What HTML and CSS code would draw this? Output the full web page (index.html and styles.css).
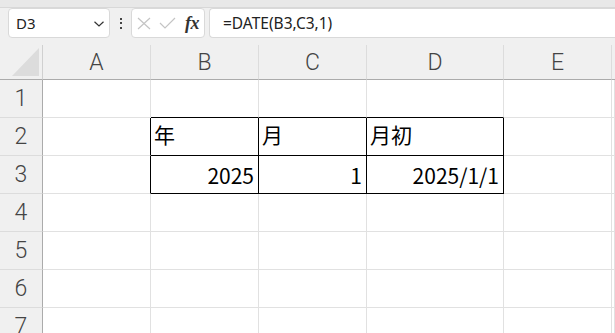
FILE: index.html
```html
<!DOCTYPE html>
<html lang="ja">
<head>
<meta charset="utf-8">
<title>Excel</title>
<link rel="stylesheet" href="styles.css">
</head>
<body>
<div class="app">
  <div class="topstrip"></div>
  <div class="fbar">
    <div class="namebox">
      <span class="nb-text">D3</span>
      <svg class="chev" width="10" height="6" viewBox="0 0 10 6"><path d="M0.5 0.8 L5 5 L9.5 0.8" fill="none" stroke="#333" stroke-width="1.2"/></svg>
    </div>
    <div class="dots"><span></span><span></span><span></span></div>
    <div class="fxbox">
      <svg class="ico" width="14" height="13" viewBox="0 0 14 13"><path d="M1 1 L13 12 M13 1 L1 12" stroke="#c4c4c4" stroke-width="1.2" fill="none"/></svg>
      <svg class="ico" width="17" height="12" viewBox="0 0 17 12"><path d="M1 6 L6 11 L16 1" stroke="#c4c4c4" stroke-width="1.2" fill="none"/></svg>
      <span class="fx">fx</span>
    </div>
    <div class="formula">=DATE(B3,C3,1)</div>
  </div>
  <div class="gap"></div>
  <div class="grid">
    <div class="corner"><div class="tri"></div></div>
    <div class="ch">A</div>
    <div class="ch">B</div>
    <div class="ch">C</div>
    <div class="ch">D</div>
    <div class="ch">E</div>
    <div class="ch last"></div>

    <div class="rh">1</div>
    <div class="c"></div>
    <div class="c bb"></div>
    <div class="c bb"></div>
    <div class="c bb"></div>
    <div class="c"></div>
    <div class="c"></div>

    <div class="rh">2</div>
    <div class="c br"></div>
    <div class="c bk txt">年</div>
    <div class="c bk txt">月</div>
    <div class="c bk txt">月初</div>
    <div class="c"></div>
    <div class="c"></div>

    <div class="rh">3</div>
    <div class="c br"></div>
    <div class="c bk num">2025</div>
    <div class="c bk num">1</div>
    <div class="c bk num">2025/1/1</div>
    <div class="c"></div>
    <div class="c"></div>

    <div class="rh">4</div>
    <div class="c"></div><div class="c"></div><div class="c"></div><div class="c"></div><div class="c"></div><div class="c"></div>
    <div class="rh">5</div>
    <div class="c"></div><div class="c"></div><div class="c"></div><div class="c"></div><div class="c"></div><div class="c"></div>
    <div class="rh">6</div>
    <div class="c"></div><div class="c"></div><div class="c"></div><div class="c"></div><div class="c"></div><div class="c"></div>
    <div class="rh">7</div>
    <div class="c"></div><div class="c"></div><div class="c"></div><div class="c"></div><div class="c"></div><div class="c"></div>
  </div>
</div>
</body>
</html>
```
FILE: styles.css
```css
* { box-sizing: border-box; }
html, body { margin: 0; padding: 0; }
body {
  width: 615px;
  height: 333px;
  overflow: hidden;
  background: #f0f0f0;
  font-family: "Noto Sans", "Noto Sans CJK JP", sans-serif;
}
.app { width: 615px; height: 333px; overflow: hidden; }
.topstrip {
  height: 8px;
  background: #e8e8e8;
  border-bottom: 1px solid #d8d8d8;
}
.fbar {
  display: flex;
  height: 30px;
  padding-left: 8px;
  background: #f0f0f0;
}
.namebox {
  width: 102px;
  background: #fff;
  border: 1px solid #d9d9d9;
  border-radius: 4px;
  display: flex;
  align-items: center;
  justify-content: space-between;
  padding: 0 5px 0 7px;
}
.nb-text { font-size: 15px; color: #222; }
.chev { margin-top: 1px; }
.dots {
  width: 21px;
  display: flex;
  flex-direction: column;
  align-items: center;
  justify-content: center;
  gap: 2.5px;
}
.dots span { width: 2px; height: 2px; background: #444; display: block; }
.fxbox {
  width: 74px;
  background: #fff;
  border: 1px solid #d9d9d9;
  border-radius: 4px;
  display: flex;
  align-items: center;
  padding: 0 0 0 5px;
  gap: 8px;
}
.fx {
  font-family: "Liberation Serif", serif;
  font-style: italic;
  font-weight: bold;
  font-size: 18px;
  color: #333;
  margin-left: 1px;
  letter-spacing: -0.5px;
}
.formula {
  flex: 1;
  margin-left: 4px;
  background: #fff;
  border: 1px solid #d9d9d9;
  border-right: none;
  border-radius: 4px 0 0 4px;
  font-size: 15.5px;
  color: #222;
  display: flex;
  align-items: center;
  padding-left: 13px;
}
.gap { height: 7px; }
.grid {
  display: grid;
  grid-template-columns: 43px 108px 108px 108px 137px 108px 1fr;
  grid-template-rows: 35px repeat(7, 38px);
}
.corner {
  background: #f0f0f0;
  border-right: 1px solid #d0d0d0;
  border-bottom: 1px solid #ababab;
  position: relative;
}
.tri {
  position: absolute;
  left: 12px;
  top: 3px;
  width: 27px;
  height: 28px;
  background: #dcdcdc;
  clip-path: polygon(100% 0, 100% 100%, 0 100%);
}
.ch {
  background: #f0f0f0;
  border-right: 1px solid #dcdcdc;
  border-bottom: 1px solid #ababab;
  display: flex;
  align-items: center;
  justify-content: center;
  font-family: "Roboto", "Noto Sans", sans-serif;
  font-weight: 300;
  font-size: 23px;
  color: #444;
}
.ch.last { border-right: none; }
.rh {
  background: #f0f0f0;
  border-right: 1px solid #ababab;
  border-bottom: 1px solid #dcdcdc;
  display: flex;
  align-items: center;
  justify-content: center;
  font-family: "Roboto", "Noto Sans", sans-serif;
  font-weight: 300;
  font-size: 23px;
  color: #444;
}
.c {
  background: #fff;
  border-right: 1px solid #e1e1e1;
  border-bottom: 1px solid #e1e1e1;
  display: flex;
  align-items: center;
  font-family: "Noto Sans CJK JP", sans-serif;
  font-size: 21px;
  color: #000;
  white-space: nowrap;
}
.c.bb { border-bottom-color: #000; }
.c.br { border-right-color: #000; }
.c.bk { border-right-color: #000; border-bottom-color: #000; }
.txt { padding-left: 3px; padding-bottom: 6px; }
.num { justify-content: flex-end; padding-right: 4px; }
```
